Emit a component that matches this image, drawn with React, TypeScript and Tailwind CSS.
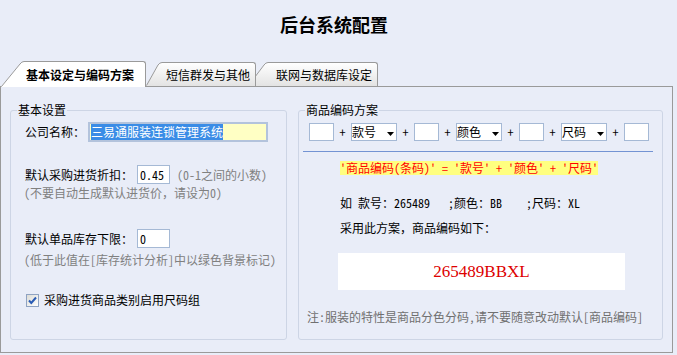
import React from "react";

function Box() {
  return <div className="w-[25px] h-[18px] border border-[#A5B9D5] bg-white shrink-0" />;
}

function Plus() {
  return <span className="w-[17px] text-center shrink-0 leading-[14px]">+</span>;
}

function Sel({ label }: { label: string }) {
  return (
    <div className="w-[46px] h-[18px] border border-[#A5B9D5] bg-white flex items-center justify-between pr-[2px] shrink-0">
      <span className="leading-[14px]">{label}</span>
      <svg width="7" height="4" viewBox="0 0 7 4" className="mt-[3px]">
        <polygon points="0,0 7,0 3.5,4" fill="#000" />
      </svg>
    </div>
  );
}

function TabSlant({ w, h, selected, id }: { w: number; h: number; selected?: boolean; id: string }) {
  const fill = selected ? "#FFFFFF" : `url(#${id})`;
  const x0 = selected ? 1.5 : 0.5;
  return (
    <svg width={w} height={h} viewBox={`0 0 ${w} ${h}`} className="block shrink-0">
      <defs>
        <linearGradient id={id} x1="0" y1="0" x2="0" y2="1">
          <stop offset="0" stopColor="#FFFFFF" />
          <stop offset="1" stopColor="#E3E3E3" />
        </linearGradient>
      </defs>
      <path d={`M${x0} ${h} L${x0} ${h - 1} L${w - 4} 3 Q${w - 2.2} 0.5 ${w} 0.5 L${w} ${h} Z`} fill={fill} />
      <path d={`M${x0} ${h - 0.5} L${w - 4} 3 Q${w - 2.2} 0.5 ${w} 0.5`} fill="none" stroke="#9A9A9A" strokeWidth="1" />
    </svg>
  );
}

function Tabs() {
  return (
    <div className="relative z-10 flex items-end h-[25px]">
      <div className="relative z-30 flex h-[26px] -mb-[1px]">
        <TabSlant w={24} h={26} selected id="tg1" />
        <div className="w-[122px] h-[26px] bg-white border-t border-r border-[#9A9A9A] rounded-tr-[3px] flex items-center pl-[2px] font-bold">
          基本设定与编码方案
        </div>
      </div>
      <div className="relative z-20 flex h-[24px]">
        <TabSlant w={16} h={24} id="tg2" />
        <div className="w-[94px] h-[24px] bg-linear-to-b from-white to-[#E3E3E3] border-t border-r border-[#9A9A9A] rounded-tr-[3px] flex items-center pl-[4px]">
          短信群发与其他
        </div>
      </div>
      <div className="relative z-10 flex h-[24px] -ml-[8px]">
        <TabSlant w={20} h={24} id="tg3" />
        <div className="w-[110px] h-[24px] bg-linear-to-b from-white to-[#E3E3E3] border-t border-r border-[#9A9A9A] rounded-tr-[3px] flex items-center pl-[8px]">
          联网与数据库设定
        </div>
      </div>
    </div>
  );
}

export default function App() {
  return (
    <div className="w-[677px] h-[355px] bg-[#E9EDF8] text-black font-['Noto_Sans_Mono_CJK_SC','Noto_Sans_CJK_SC','Liberation_Sans',sans-serif] text-[12px] leading-[14px] overflow-hidden">
      <div className="h-[61px] pt-[14px] pr-[9px] text-center text-[18px] leading-[20px] font-bold">后台系统配置</div>
      <Tabs />
      <div className="w-[673px] h-[267px] border border-[#9A9A9A] flex pt-[16px] pl-[9px] gap-[11px]">
        <fieldset className="w-[277px] h-[237px] border border-[#CDD5E5] rounded-[3px] shrink-0">
          <legend className="ml-[6px] px-[1px] leading-[14px]">基本设置</legend>
          <div className="pl-[14px]">
            <div className="mt-[5px] h-[20px] flex items-center">
              <span className="w-[60px] shrink-0">公司名称：</span>
              <div className="ml-[3px] w-[180px] h-[20px] border-2 border-[#B3C3DC] bg-[#FFFFC4] flex items-center pl-[1px]">
                <span className="bg-[#3A8CE6] text-white h-[16px] leading-[16px]">三易通服装连锁管理系统</span>
              </div>
            </div>
            <div className="mt-[23px] h-[19px] flex items-center">
              <span className="shrink-0">默认采购进货折扣：</span>
              <div className="ml-[4px] w-[33px] h-[19px] border border-[#A5B9D5] bg-white pl-[2px] flex items-center">0.45</div>
              <span className="ml-[7px] text-[#808080]">(0-1之间的小数)</span>
            </div>
            <div className="mt-[2px] -ml-[1px] text-[#808080]">(不要自动生成默认进货价，请设为0)</div>
            <div className="mt-[29px] h-[19px] flex items-center">
              <span className="shrink-0">默认单品库存下限：</span>
              <div className="ml-[4px] w-[33px] h-[19px] border border-[#A5B9D5] bg-white pl-[2px] flex items-center">0</div>
            </div>
            <div className="mt-[5px] -ml-[1px] text-[#808080]">(低于此值在[库存统计分析]中以绿色背景标记)</div>
            <div className="mt-[26px] ml-[1px] h-[14px] flex items-center">
              <div className="w-[13px] h-[13px] border border-[#8FA3C2] bg-linear-to-br from-[#DCDCD7] to-white flex items-center justify-center shrink-0">
                <svg width="9" height="9" viewBox="0 0 9 9">
                  <path d="M1 4.5 L3.3 7 L8 1.5" fill="none" stroke="#2A5CB5" strokeWidth="2" />
                </svg>
              </div>
              <span className="ml-[5px]">采购进货商品类别启用尺码组</span>
            </div>
          </div>
        </fieldset>
        <fieldset className="w-[365px] h-[237px] border border-[#CDD5E5] rounded-[3px] shrink-0">
          <legend className="ml-[6px] px-[1px] leading-[14px]">商品编码方案</legend>
          <div className="pl-[10px]">
            <div className="mt-[6px] h-[18px] flex items-center">
              <Box />
              <Plus />
              <Sel label="款号" />
              <Plus />
              <Box />
              <Plus />
              <Sel label="颜色" />
              <Plus />
              <Box />
              <Plus />
              <Sel label="尺码" />
              <Plus />
              <Box />
            </div>
            <div className="mt-[10px] -ml-[6px] w-[350px] border-t border-[#7393D3]" />
            <div className="mt-[9px] ml-[31px] h-[14px]">
              <span className="inline-block bg-[#FFFF80] text-[#FF0000] whitespace-pre leading-[14px]">'商品编码(条码)' = '款号' + '颜色' + '尺码'</span>
            </div>
            <div className="mt-[21px] ml-[31px] whitespace-pre">如 款号：265489   ;颜色：BB    ;尺码：XL</div>
            <div className="mt-[11px] ml-[31px]">采用此方案，商品编码如下：</div>
            <div className="mt-[18px] ml-[29px] w-[287px] h-[37px] bg-white flex items-center justify-center font-['Liberation_Serif',serif] text-[17px] text-[#DD0000]">
              265489BBXL
            </div>
            <div className="mt-[20px] -ml-[2px] text-[#707070] whitespace-pre">注:服装的特性是商品分色分码,请不要随意改动默认[商品编码]</div>
          </div>
        </fieldset>
      </div>
    </div>
  );
}
